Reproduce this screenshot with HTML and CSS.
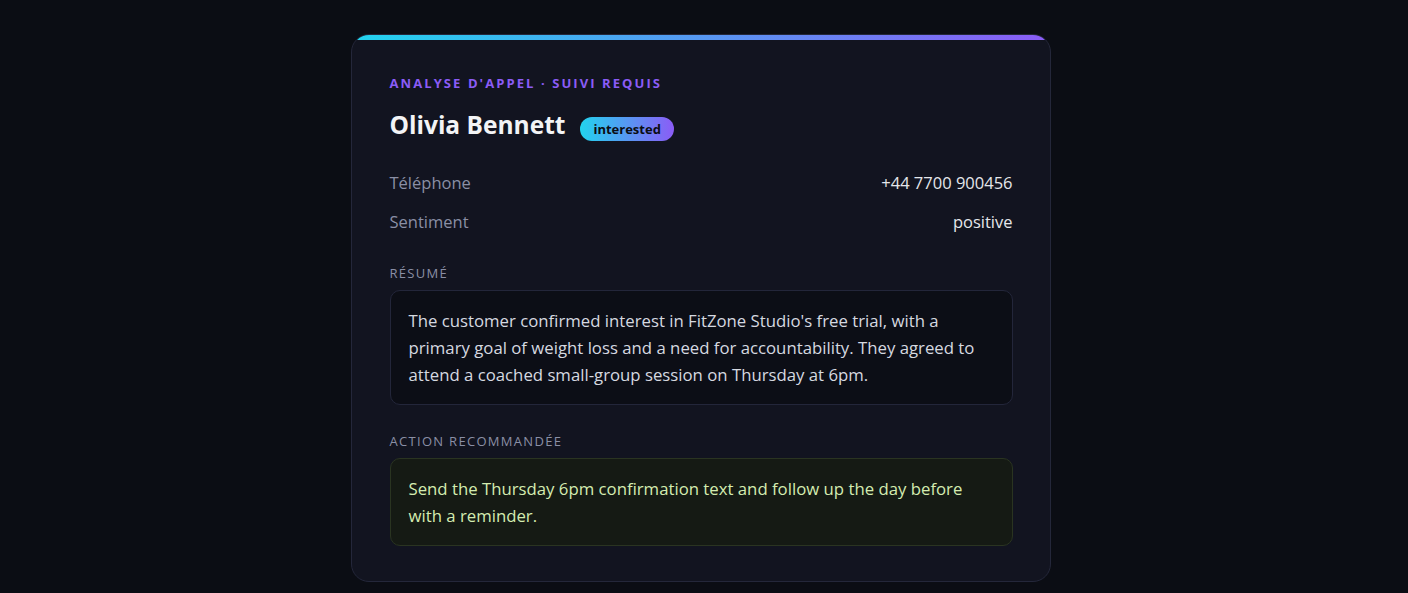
FILE: index.html
```html
<!DOCTYPE html>
<html>
<head>
  <title>Analyse d'appel</title>
  <link rel="stylesheet" href="styles.css">
</head>
<body>

  <div class="card">
    <p class="eyebrow">Analyse d'appel · Suivi requis</p>

    <div class="header">
      <h1>Olivia Bennett</h1>
      <span class="badge">interested</span>
    </div>

    <div class="details">
      <div class="row">
        <span class="label">Téléphone</span>
        <span class="value">+44 7700 900456</span>
      </div>
      <div class="row">
        <span class="label">Sentiment</span>
        <span class="value">positive</span>
      </div>
    </div>

    <div class="section">
      <h2>Résumé</h2>
      <div class="box">The customer confirmed interest in FitZone Studio's free trial, with a primary goal of weight loss and a need for accountability. They agreed to attend a coached small-group session on Thursday at 6pm.</div>
    </div>

    <div class="section">
      <h2>Action recommandée</h2>
      <div class="box action">Send the Thursday 6pm confirmation text and follow up the day before with a reminder.</div>
    </div>
  </div>

</body>
</html>
```

FILE: styles.css
```css
body {
  margin: 0;
  padding: 34px 7px 32px 0;
  background-color: #0b0d14;
  font-family: "Segoe UI", "Open Sans", sans-serif;
  color: #e5e7eb;
}

.card {
  position: relative;
  width: 700px;
  box-sizing: border-box;
  margin: 0 auto;
  padding: 39px 37px 35px 38px;
  background-color: #121420;
  border: 1px solid #24273a;
  border-radius: 18px;
  overflow: hidden;
}

/* gradient strip along the top edge */
.card::before {
  content: "";
  position: absolute;
  top: 0;
  left: 0;
  right: 0;
  height: 5px;
  background: linear-gradient(90deg, #22d3ee, #8b5cf6);
}

.eyebrow {
  margin: 0;
  font-size: 13px;
  line-height: 18px;
  font-weight: 700;
  letter-spacing: 0.16em;
  text-transform: uppercase;
  color: #8b5cf6;
}

.header {
  display: flex;
  align-items: baseline;
  gap: 15px;
  margin-top: 18px;
}

.header h1 {
  margin: 0;
  font-size: 24.5px;
  line-height: 30px;
  font-weight: 700;
  color: #f3f4f6;
}

.badge {
  padding: 3px 13px;
  border-radius: 12px;
  background: linear-gradient(90deg, #22d3ee, #8b5cf6);
  color: #0b0d14;
  font-size: 13px;
  line-height: 18px;
  font-weight: 700;
}

.details {
  margin-top: 22px;
}

.row {
  display: flex;
  justify-content: space-between;
  padding: 7.5px 0;
  font-size: 16.5px;
  line-height: 24px;
}

.label {
  color: #8a8fa5;
}

.value {
  color: #e5e7eb;
}

.section {
  margin-top: 24px;
}

.section + .section {
  margin-top: 28px;
}

.section h2 {
  margin: 0 0 9px;
  font-size: 13px;
  line-height: 16px;
  font-weight: 400;
  letter-spacing: 0.1em;
  text-transform: uppercase;
  color: #8a8fa5;
}

.box {
  padding: 16px 18px;
  background-color: #0c0e16;
  border: 1px solid #23263a;
  border-radius: 10px;
  font-size: 16.75px;
  line-height: 27px;
  color: #d6d9e0;
}

.box.action {
  background-color: #151a14;
  border-color: #2a3421;
  color: #d4ecb0;
}
```
